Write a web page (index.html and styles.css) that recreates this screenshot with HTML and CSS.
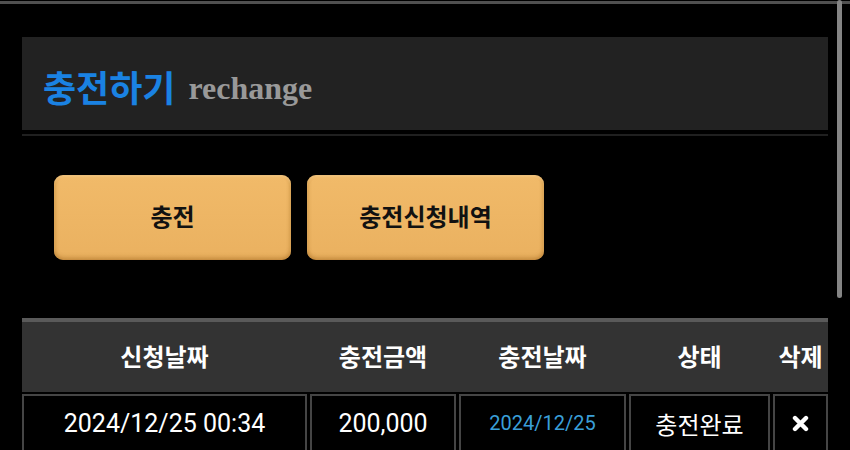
FILE: index.html
```html
<!DOCTYPE html>
<html lang="ko">
<head>
  <meta charset="UTF-8">
  <title>충전하기</title>
  <link rel="stylesheet" href="styles.css">
</head>
<body>

  <div class="top-line"></div>
  <div class="scrollbar"></div>

  <div class="page">
    <div class="title-wrap">
      <div class="title-box">
        <h2 class="title">충전하기</h2>
        <span class="sub-title">rechange</span>
      </div>
    </div>

    <div class="tabs">
      <button type="button" class="tab-btn">충전</button>
      <button type="button" class="tab-btn">충전신청내역</button>
    </div>

    <div class="history">
      <div class="history-head">
        <div>신청날짜</div>
        <div>충전금액</div>
        <div>충전날짜</div>
        <div>상태</div>
        <div>삭제</div>
      </div>
      <div class="history-row">
        <div class="cell num">2024/12/25 00:34</div>
        <div class="cell num">200,000</div>
        <div class="cell num date">2024/12/25</div>
        <div class="cell">충전완료</div>
        <div class="cell">
          <svg class="del-icon" width="17" height="17" viewBox="0 0 17 17">
            <path d="M3 3 L14 14 M14 3 L3 14" stroke="#fff" stroke-width="4.4" stroke-linecap="round"/>
          </svg>
        </div>
      </div>
    </div>
  </div>

</body>
</html>
```

FILE: styles.css
```css
body {
  margin: 0;
  background-color: #000;
  font-family: "Noto Sans CJK KR", Roboto, sans-serif;
  color: #fff;
  overflow: hidden;
}
.top-line {
  height: 3px;
  margin-top: 1px;
  background-color: #505050;
}
.scrollbar {
  position: fixed;
  top: 0;
  right: 8px;
  width: 5px;
  height: 298px;
  border-radius: 3px;
  background-color: #858585;
}
.page {
  padding: 0 22px;
}
.title-wrap {
  margin-top: 33px;
  padding-bottom: 4px;
  border-bottom: 2px solid #202020;
}
.title-box {
  height: 93px;
  background-color: #222;
  display: flex;
  align-items: center;
  padding-left: 21px;
  padding-top: 4px;
  box-sizing: border-box;
}
.title {
  margin: 0;
  font-size: 36px;
  font-weight: bold;
  color: #1a82e3;
}
.sub-title {
  margin-left: 13px;
  margin-top: 6px;
  font-family: "Liberation Serif", serif;
  font-size: 32px;
  font-weight: bold;
  color: #999;
}
.tabs {
  display: flex;
  gap: 16px;
  margin-top: 39px;
  padding-left: 32px;
}
.tab-btn {
  width: 237px;
  height: 85px;
  padding: 0 0 4px;
  border: none;
  border-radius: 9px;
  background: linear-gradient(#f1ba69, #eab160);
  box-shadow: inset 0 2px 2px rgba(255, 230, 180, 0.35), inset 0 -3px 4px rgba(140, 80, 10, 0.3), inset 2px 0 3px rgba(140, 80, 10, 0.12), inset -2px 0 3px rgba(140, 80, 10, 0.12);
  font-family: "Noto Sans CJK KR", sans-serif;
  font-size: 24px;
  font-weight: bold;
  color: #111;
  cursor: pointer;
}
.history {
  margin-top: 58px;
}
.history-head,
.history-row {
  display: grid;
  grid-template-columns: 285px 146px 167px 141px 55px;
  column-gap: 3px;
}
.history-head {
  height: 74px;
  padding-bottom: 4px;
  box-sizing: border-box;
  border-top: 4px solid #5a5a5a;
  background-color: #333;
  align-items: center;
  text-align: center;
  font-size: 24px;
  font-weight: bold;
}
.history-row {
  margin-top: 2px;
}
.cell {
  height: 54px;
  padding-bottom: 2px;
  border: 2px solid #454545;
  display: flex;
  align-items: center;
  justify-content: center;
  font-size: 24px;
}
.num {
  font-family: Roboto, sans-serif;
  font-size: 25px;
}
.date {
  font-size: 20px;
  color: #3a9fd8;
}
.del-icon {
  display: block;
}
```
